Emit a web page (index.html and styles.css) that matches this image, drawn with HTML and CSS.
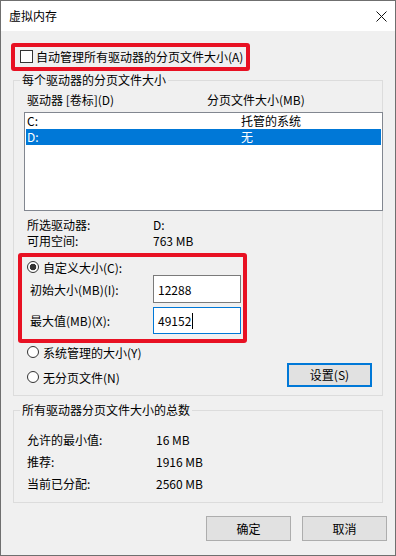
FILE: index.html
```html
<!DOCTYPE html>
<html lang="zh-CN">
<head>
<meta charset="utf-8">
<title>虚拟内存</title>
<link rel="stylesheet" href="styles.css">
</head>
<body>
<div class="window">
  <div class="titlebar">
    <span class="title">虚拟内存</span>
    <svg class="close" width="11" height="11" viewBox="0 0 11 11"><path d="M0.5 0.5L10.5 10.5M10.5 0.5L0.5 10.5" stroke="#111" stroke-width="1" fill="none"/></svg>
  </div>
  <div class="content">
    <div class="hl hl-auto">
      <span class="checkbox"></span><span class="label">自动管理所有驱动器的分页文件大小(A)</span>
    </div>

    <div class="group group-drive">
      <span class="group-title">每个驱动器的分页文件大小</span>
      <div class="headers"><span class="hcol1">驱动器 [卷标](D)</span><span>分页文件大小(MB)</span></div>
      <div class="listbox">
        <div class="row"><span class="col-drive">C:</span><span>托管的系统</span></div>
        <div class="row selected"><span class="col-drive">D:</span><span>无</span></div>
      </div>
      <div class="info">
        <div class="info-row"><span class="info-lbl">所选驱动器:</span><span>D:</span></div>
        <div class="info-row"><span class="info-lbl">可用空间:</span><span>763 MB</span></div>
      </div>
      <div class="hl hl-custom">
        <div class="radio-row"><span class="radio checked"></span><span>自定义大小(C):</span></div>
        <div class="field-row"><span class="field-lbl">初始大小(MB)(I):</span><span class="textbox">12288</span></div>
        <div class="field-row field-row2"><span class="field-lbl">最大值(MB)(X):</span><span class="textbox focused">49152<span class="caret"></span></span></div>
      </div>
      <div class="radio-row radio-system"><span class="radio"></span><span>系统管理的大小(Y)</span></div>
      <div class="set-row">
        <div class="radio-row"><span class="radio"></span><span>无分页文件(N)</span></div>
        <button class="btn btn-default">设置(S)</button>
      </div>
    </div>

    <div class="group group-total">
      <span class="group-title">所有驱动器分页文件大小的总数</span>
      <div class="totals">
        <div class="total-row"><span class="total-lbl">允许的最小值:</span><span>16 MB</span></div>
        <div class="total-row"><span class="total-lbl">推荐:</span><span>1916 MB</span></div>
        <div class="total-row"><span class="total-lbl">当前已分配:</span><span>2560 MB</span></div>
      </div>
    </div>

    <div class="dialog-buttons">
      <button class="btn">确定</button>
      <button class="btn">取消</button>
    </div>
  </div>
</div>
</body>
</html>
```

FILE: styles.css
```css
* {
  box-sizing: border-box;
}

body {
  margin: 0;
  font-family: "Noto Sans CJK SC", "Noto Sans", sans-serif;
  font-size: 12px;
  color: #000;
  background: #f0f0f0;
}

.window {
  width: 396px;
  height: 556px;
  border: 1px solid #6f6f6f;
  background: #f0f0f0;
  display: flex;
  flex-direction: column;
}

.titlebar {
  height: 30px;
  flex: none;
  background: #fff;
  display: flex;
  align-items: center;
  justify-content: space-between;
  padding: 0 8px 0 8px;
}

.title {
  line-height: 30px;
  color: #000;
}

.close {
  display: block;
}

.content {
  flex: 1;
}

.hl {
  border: 4px solid #e81123;
  border-radius: 3px;
}

.hl-auto {
  margin: 12px 0 0 10px;
  width: 239px;
  height: 28px;
  display: flex;
  align-items: center;
  padding: 0 0 1px 5px;
  gap: 3px;
}

.checkbox {
  width: 13px;
  height: 13px;
  border: 1px solid #333;
  background: #fff;
  flex: none;
}

.label {
  line-height: 16px;
  white-space: nowrap;
}

.group {
  width: 370px;
  margin-left: 12px;
  border: 1px solid #dcdcdc;
  padding: 0 0 8px 10px;
}

.group-drive {
  margin-top: 9px;
}

.group-title {
  display: block;
  width: fit-content;
  margin: -8px 0 0 -4px;
  padding: 0 2px;
  line-height: 14px;
  background: #f0f0f0;
  white-space: nowrap;
}

.headers {
  display: flex;
  margin-top: 6px;
  padding-left: 3px;
  line-height: 14px;
  white-space: nowrap;
}

.hcol1 {
  width: 180px;
}

.listbox {
  margin-top: 5px;
  width: 359px;
  height: 99px;
  border: 1px solid #828790;
  background: #fff;
  padding: 0 1px 0 1px;
}

.row {
  display: flex;
  height: 16px;
  line-height: 16px;
  padding-left: 1px;
  white-space: nowrap;
}

.col-drive {
  width: 214px;
}

.row.selected {
  background: #0078d7;
  color: #fff;
}

.info {
  margin-top: 6px;
  padding-left: 3px;
}

.info-row {
  display: flex;
  line-height: 16px;
}

.info-lbl {
  width: 126px;
}

.hl-custom {
  margin: 4px 0 0 -6px;
  width: 229px;
  height: 90px;
  padding-top: 2px;
}

.radio-row {
  display: flex;
  align-items: center;
  height: 16px;
  gap: 4px;
  white-space: nowrap;
}

.hl-custom .radio-row {
  padding-left: 5px;
}

.radio {
  width: 12px;
  height: 12px;
  border: 1px solid #333;
  border-radius: 50%;
  background: #fff;
  flex: none;
}

.radio.checked {
  background: radial-gradient(circle, #333 0 3px, #fff 3.6px);
}

.field-row {
  display: flex;
  align-items: center;
  height: 28px;
  padding-left: 8px;
}

.field-row2 {
  margin-top: 4px;
  height: 27px;
}

.field-lbl {
  width: 123px;
  white-space: nowrap;
}

.textbox {
  width: 88px;
  height: 100%;
  border: 1px solid #7a7a7a;
  background: #fff;
  display: flex;
  align-items: center;
  padding-left: 4px;
}

.textbox.focused {
  border-color: #0078d7;
}

.caret {
  display: inline-block;
  width: 1px;
  height: 16px;
  background: #000;
  margin-left: 1px;
}

.radio-system {
  margin-top: 1px;
  padding-left: 3px;
}

.set-row {
  margin-top: 3px;
  display: flex;
  align-items: center;
  justify-content: space-between;
  padding: 0 10px 0 3px;
  height: 24px;
}

.set-row .radio-row {
  margin-top: 4px;
}

.btn {
  font: inherit;
  color: #000;
  width: 85px;
  height: 25px;
  background: #e1e1e1;
  border: 1px solid #adadad;
  padding: 0;
  line-height: 16px;
}

.btn-default {
  height: 24px;
  border: 2px solid #0078d7;
}

.group-total {
  margin-top: 14px;
  padding-bottom: 10px;
}

.totals {
  margin-top: 15px;
  padding-left: 3px;
  display: flex;
  flex-direction: column;
  gap: 6px;
}

.total-row {
  display: flex;
  line-height: 16px;
}

.total-lbl {
  width: 129px;
}

.dialog-buttons {
  display: flex;
  justify-content: flex-end;
  gap: 11px;
  margin-top: 13px;
  padding-right: 8px;
}
```
